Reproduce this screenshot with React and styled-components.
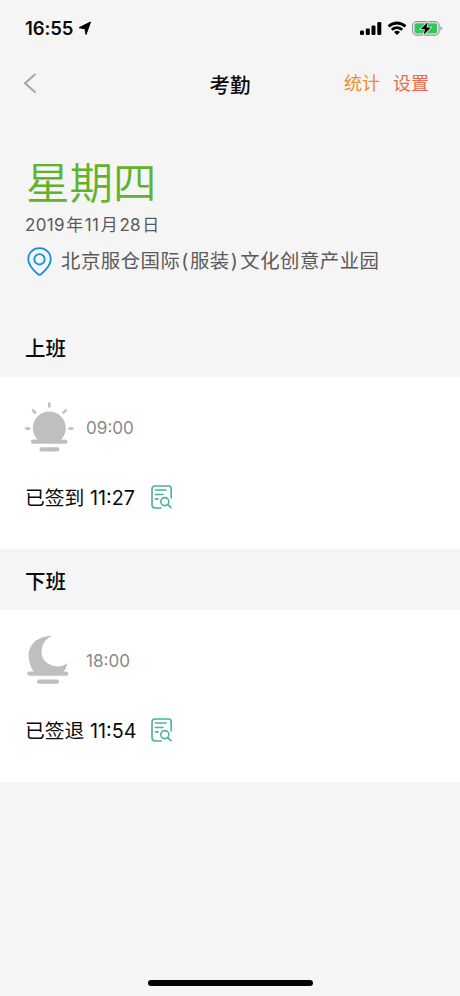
import React from 'react';
import styled, { createGlobalStyle } from 'styled-components';

const GlobalStyle = createGlobalStyle`
  * { box-sizing: border-box; }
  body { margin: 0; background: #f5f5f5; }
`;

const Screen = styled.div`
  display: flex;
  flex-direction: column;
  width: 460px;
  height: 996px;
  overflow: hidden;
  background: #f5f5f5;
  color: #0b0b0b;
  font-family: Inter, 'Noto Sans CJK SC', sans-serif;
  white-space: nowrap;
  svg { display: block; flex: none; }
`;

const StatusBar = styled.header`
  display: flex;
  align-items: center;
  height: 56px;
  padding: 0 17px 0 25px;
`;

const Clock = styled.span`
  width: 49px;
  font-size: 18.5px;
  font-weight: 600;
  letter-spacing: -0.1px;
  line-height: 24px;
`;

const StatusIcons = styled.div`
  display: flex;
  align-items: center;
  gap: 5px;
  margin-left: auto;
`;

const NavBar = styled.nav`
  display: grid;
  grid-template-columns: 1fr auto 1fr;
  align-items: center;
  height: 56px;
  padding: 0 31px 0 23px;
`;

const Title = styled.h1`
  margin: 3px 0 0 8px;
  font-size: 20.5px;
  font-weight: 500;
  line-height: 30px;
`;

const Actions = styled.div`
  display: flex;
  justify-content: flex-end;
  gap: 13px;
`;

const Action = styled.span`
  font-size: 18px;
  line-height: 26px;
  color: ${(p) => p.$color};
`;

const Hero = styled.section`
  display: flex;
  flex-direction: column;
  height: 206px;
  padding: 41px 25px 0;
`;

const Weekday = styled.div`
  height: 60px;
  margin-left: 1px;
  line-height: 60px;
  font-size: 43.5px;
  font-weight: 350;
  color: #62b32b;
`;

const DateText = styled.div`
  display: flex;
  gap: 1.4px;
  height: 24px;
  line-height: 24px;
  font-size: 17px;
  letter-spacing: 0.3px;
  color: #5a5a5a;
`;

const Place = styled.div`
  display: flex;
  align-items: center;
  gap: 9px;
  height: 49px;
  margin-left: 2px;
  font-size: 19.4px;
  letter-spacing: 0.5px;
  color: #5a5a5a;
`;

const Address = styled.span`
  line-height: 28px;
  margin-top: -1px;
`;

const Bracketed = styled.span`
  display: inline-flex;
  gap: 1px;
  margin: 0 2px 0 1px;
`;

const SectionTitle = styled.h2`
  height: ${(p) => p.$height}px;
  margin: 0;
  padding: ${(p) => p.$inset}px 0 0 25px;
  font-size: 20.5px;
  font-weight: 500;
  line-height: 30px;
`;

const Card = styled.section`
  display: flex;
  flex-direction: column;
  height: 172px;
  padding: 24px 25px;
  background: #fff;
`;

const ShiftRow = styled.div`
  display: flex;
  align-items: center;
  gap: 11px;
  height: 52px;
`;

const ShiftTime = styled.span`
  padding-top: 1px;
  font-size: 17.1px;
  line-height: 24px;
  color: #898989;
`;

const RecordRow = styled.div`
  display: flex;
  align-items: center;
  height: 30px;
  margin-top: 29px;
`;

const Record = styled.span`
  width: 126px;
  padding-top: 2px;
  font-size: 19.8px;
  line-height: 30px;
`;

const HomeIndicator = styled.div`
  width: 165px;
  height: 6px;
  margin: auto auto 10px 148px;
  border-radius: 3px;
  background: #000;
`;

const LocationArrow = () => (
  <svg width="18" height="14" viewBox="0 0 18 14">
    <path d="M16.500 1 5 6.700l6 1.100L12 13.500Z" fill="#000" stroke="#000" strokeWidth="1" strokeLinejoin="round" />
  </svg>
);

const Signal = () => (
  <svg width="22" height="14" viewBox="0 0 22 14" fill="#000">
    <rect x="0" y="9.500" width="4" height="4.500" rx="1.200" />
    <rect x="5.800" y="7.500" width="4" height="6.500" rx="1.200" />
    <rect x="11.500" y="4.500" width="4" height="9.500" rx="1.200" />
    <rect x="17.300" y="1" width="4" height="13" rx="1.200" />
  </svg>
);

const Wifi = () => (
  <svg width="20" height="14" viewBox="0 0 20 14" fill="none" stroke="#000" strokeWidth="2.700">
    <path d="M1.500 5.400Q10-1.400 18.500 5.400M4.700 8.700q5.300-4.300 10.600 0" />
    <path d="M7 11q3-2.300 6 0l-3 3Z" fill="#000" stroke="none" />
  </svg>
);

const Battery = () => (
  <svg width="31" height="15" viewBox="0 0 31 15">
    <rect x=".6" y=".6" width="26.500" height="13.500" rx="4" fill="none" stroke="#929292" strokeWidth="1.100" />
    <rect x="2.500" y="2.300" width="22.700" height="10.100" rx="2" fill="#32c759" />
    <path d="M28.500 5q3 2.300 0 4.800Z" fill="#929292" />
    <path d="M15.700 1 8.700 8.300h4.200L11.600 14l7.200-7.500h-4.200Z" fill="#000" stroke="#f5f5f5" strokeWidth="1.400" paintOrder="stroke" />
  </svg>
);

const BackIcon = () => (
  <svg width="14" height="22" viewBox="0 0 14 22" fill="none" stroke="#a5a5a5" strokeWidth="2">
    <path d="M12.500 .9 2 10.200l10.500 9.300" />
  </svg>
);

const PinIcon = () => (
  <svg width="25" height="29" viewBox="0 0 25 29" fill="none" stroke="#188fda" strokeWidth="1.800">
    <path d="M12.500 1.200C6 1.200 1.200 6 1.200 12.200c0 6 5.800 11.500 9.800 15q1.500 1.200 3 0c4-3.500 9.800-9 9.800-15 0-6.200-4.800-11-11.300-11Z" />
    <circle cx="12.500" cy="12.300" r="5.200" />
  </svg>
);

const SunIcon = () => (
  <svg width="50" height="52" viewBox="0 0 50 52" fill="#bfbfbf" stroke="#bfbfbf" strokeLinecap="round">
    <path d="M13 39a16.500 16.500 0 1 1 22.600 0Z" stroke="none" />
    <path d="M24.300 2.500v3M8 9.300l2 2.300M40.700 9.300l-2.200 2.300M1.300 27.600h2.700M44.600 27.600h2.700" strokeWidth="2.600" />
    <path d="M8 40.700h32.300M16.500 48.300h16" strokeWidth="4.200" />
  </svg>
);

const MoonIcon = () => (
  <svg width="50" height="52" viewBox="0 0 50 52" fill="#bfbfbf" stroke="#bfbfbf" strokeLinecap="round">
    <path d="M27.300 2C13 1.200 3.600 10.500 3.600 21.500q0 9.500 6 17.500h27.700q4.200-3.800 5-10-4 3.700-9.800 3.400C23 32 16.500 26 16.500 18 16.500 10.500 20.500 4.500 27.300 2Z" stroke="none" />
    <path d="M4.300 39.700h37M14 47.700h18" strokeWidth="4.300" />
  </svg>
);

const RecordIcon = () => (
  <svg width="22" height="24" viewBox="0 0 22 24" fill="none" stroke="#4bb197" strokeWidth="1.600" strokeLinecap="round">
    <path d="M10 23H4.200Q1 23 1 19.800V4.200Q1 1 4.200 1h13.600Q20.200 1 20.200 4.200V13M4.500 5h10.500M4.500 9.500h7.500M4.500 13.900h2.500" />
    <circle cx="13.800" cy="16.600" r="4" />
    <path d="m16.700 19.600 3.300 3" />
  </svg>
);

const shifts = [
  { title: '上班', height: 59, inset: 16, time: '09:00', record: '已签到 11:27', Icon: SunIcon },
  { title: '下班', height: 61, inset: 18, time: '18:00', record: '已签退 11:54', Icon: MoonIcon },
];

const dateParts = ['2019', '年', '11', '月', '28', '日'];

export default function App() {
  return (
    <Screen>
      <GlobalStyle />
      <StatusBar>
        <Clock>16:55</Clock>
        <LocationArrow />
        <StatusIcons><Signal /><Wifi /><Battery /></StatusIcons>
      </StatusBar>
      <NavBar>
        <BackIcon />
        <Title>考勤</Title>
        <Actions>
          <Action $color="#f58b27">统计</Action>
          <Action $color="#ed6a50">设置</Action>
        </Actions>
      </NavBar>
      <Hero>
        <Weekday>星期四</Weekday>
        <DateText>{dateParts.map((part) => <span key={part}>{part}</span>)}</DateText>
        <Place>
          <PinIcon />
          <Address>
            北京服仓国际
            <Bracketed><span>(</span><span>服装</span><span>)</span></Bracketed>
            文化创意产业园
          </Address>
        </Place>
      </Hero>
      {shifts.map(({ title, height, inset, time, record, Icon }) => (
        <React.Fragment key={title}>
          <SectionTitle $height={height} $inset={inset}>{title}</SectionTitle>
          <Card>
            <ShiftRow><Icon /><ShiftTime>{time}</ShiftTime></ShiftRow>
            <RecordRow><Record>{record}</Record><RecordIcon /></RecordRow>
          </Card>
        </React.Fragment>
      ))}
      <HomeIndicator />
    </Screen>
  );
}
